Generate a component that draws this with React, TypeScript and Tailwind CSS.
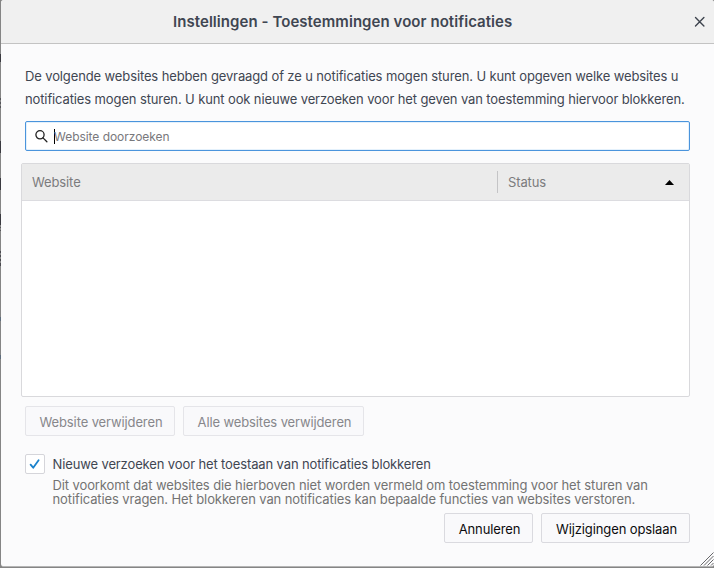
import React from "react";

// Slices of the page that show along the dialog's left edge: [top, height, colour]
const edgeMarks: [number, number, string][] = [
  [54, 8, "#3a3a40"],
  [98, 2, "#55555a"],
  [102, 2, "#55555a"],
  [106, 2, "#55555a"],
  [141, 12, "#3a3a40"],
  [178, 12, "#3a3a40"],
  [214, 11, "#3a3a40"],
  [227, 1, "#55555a"],
  [230, 1, "#55555a"],
  [251, 2, "#4a4a50"],
  [255, 2, "#4a4a50"],
  [259, 2, "#4a4a50"],
  [263, 3, "#4a4a50"],
  [317, 4, "#5d6c7c"],
  [355, 4, "#5d6c7c"],
];

export default function App() {
  return (
    <div className="relative flex h-[568px] w-[714px] flex-col overflow-hidden bg-[#858585] pb-[1px] pl-px font-['Inter',sans-serif] text-[13px] tracking-[-0.115px] text-[#3f4652]">
      {edgeMarks.map(([top, height, background]) => (
        <i key={top} className="absolute left-0 w-px" style={{ top, height, background }} />
      ))}
      <div className="flex min-h-0 flex-1 flex-col rounded-[3px] border-b border-[#b5b5b5] bg-[#fbfbfc]">
        <header className="flex h-11 shrink-0 items-center rounded-t-[3px] border-b border-[#c3c3c3] bg-[#f0f0f0] pr-2">
          <h1 className="ml-[172px] whitespace-nowrap text-[15px] font-semibold leading-5 tracking-[0.06px]">
            Instellingen - Toestemmingen voor notificaties
          </h1>
          <button aria-label="Sluiten" className="ml-auto">
            <svg width="12" height="12" viewBox="0 0 12 12" className="block" fill="none" stroke="#3e444e" strokeWidth="1.4" strokeLinecap="round">
              <path d="M1.5 1.5l8.4 8.4M9.9 1.5l-8.4 8.4" />
            </svg>
          </button>
        </header>

        <main className="flex flex-col pl-6 pr-6">
          <p className="mt-[21px] whitespace-nowrap leading-[23px] tracking-[-0.123px]">
            De volgende websites hebben gevraagd of ze u notificaties mogen sturen. U kunt opgeven welke websites u
            <br />
            notificaties mogen sturen. U kunt ook nieuwe verzoeken voor het geven van toestemming hiervoor blokkeren.
          </p>

          <div className="mt-[10px] flex h-[30px] items-center rounded-[2px] border border-[#4a94dc] bg-white pl-[10px] shadow-[inset_0_0_0_1px_#e4f1fc]">
            <svg width="13" height="13" viewBox="0 0 13 13" className="-ml-px block" fill="none" stroke="#222" strokeWidth="1.3" strokeLinecap="round">
              <circle cx="5" cy="4.8" r="4.1" />
              <path d="M8 7.9l3.9 3.9" />
            </svg>
            <i className="ml-[6px] h-[15px] w-px bg-black" />
            <span className="-ml-px pt-[2px] text-[12px] tracking-[-0.04px] text-[#78787c]">Website doorzoeken</span>
          </div>

          <section className="-ml-1 mt-[12px] flex h-[234px] flex-col rounded-[2px] border border-[#d9d9dc] bg-white">
            <div className="flex h-[37px] shrink-0 items-center border-b border-[#dcdce0] bg-[#ebebeb] text-[#7b7b7d]">
              <span className="w-[475px] pl-[10px] pt-px">Website</span>
              <i className="h-[22px] w-px bg-[#c4c4c6]" />
              <span className="pl-[10px] pt-px">Status</span>
              <svg width="9" height="5" viewBox="0 0 9 5" className="ml-auto mr-[15px]">
                <path d="M0 5L4.5 0L9 5z" fill="#000" />
              </svg>
            </div>
          </section>

          <div className="mt-[9px] flex gap-2 text-[#87878b]">
            <button className="h-[30px] w-[150px] rounded-[2px] border border-[#e5e5e9] bg-[#f9f9fb] pl-[2px] pt-[3px]">Website verwijderen</button>
            <button className="h-[30px] w-[181px] rounded-[2px] border border-[#e5e5e9] bg-[#f9f9fb] pl-[2px] pt-[3px]">Alle websites verwijderen</button>
          </div>

          <div className="mt-[18px] flex h-5 items-center gap-2">
            <span className="flex h-5 w-5 items-center justify-center rounded-[2px] border border-[#d5d5da] bg-white">
              <svg width="12" height="12" viewBox="0 0 12 12" fill="none" stroke="#1a82cc" strokeWidth="1.8" strokeLinecap="round" strokeLinejoin="round">
                <path d="M1.6 6.7l2.6 3L9.6 2.2" />
              </svg>
            </span>
            <span className="-ml-[0.5px] pt-px tracking-[-0.125px]">Nieuwe verzoeken voor het toestaan van notificaties blokkeren</span>
          </div>
          <p className="ml-[27.5px] mt-[4px] whitespace-nowrap leading-[14px] tracking-[-0.108px] text-[#737373]">
            Dit voorkomt dat websites die hierboven niet worden vermeld om toestemming voor het sturen van
            <br />
            notificaties vragen. Het blokkeren van notificaties kan bepaalde functies van websites verstoren.
          </p>

          <div className="mt-[7px] flex justify-end gap-2 text-[#0c0c0d]">
            <button className="h-[30px] w-[89px] rounded-[2px] border border-[#dadadf] bg-[#f9f9fb] pl-[2px] pt-[3px]">Annuleren</button>
            <button className="h-[30px] w-[149px] rounded-[2px] border border-[#dadadf] bg-[#f9f9fb] pl-[2px] pt-[3px]">Wijzigingen opslaan</button>
          </div>
        </main>
      </div>
      <svg width="14" height="14" viewBox="0 0 14 14" className="absolute bottom-[2px] right-0" fill="none" stroke="#68686b" strokeWidth="1">
        <path d="M0.5 13.5L13.5 0.5M4 13.5L13.5 4M7.5 13.5L13.5 7.5M11 13.5L13.5 11" />
      </svg>
    </div>
  );
}
